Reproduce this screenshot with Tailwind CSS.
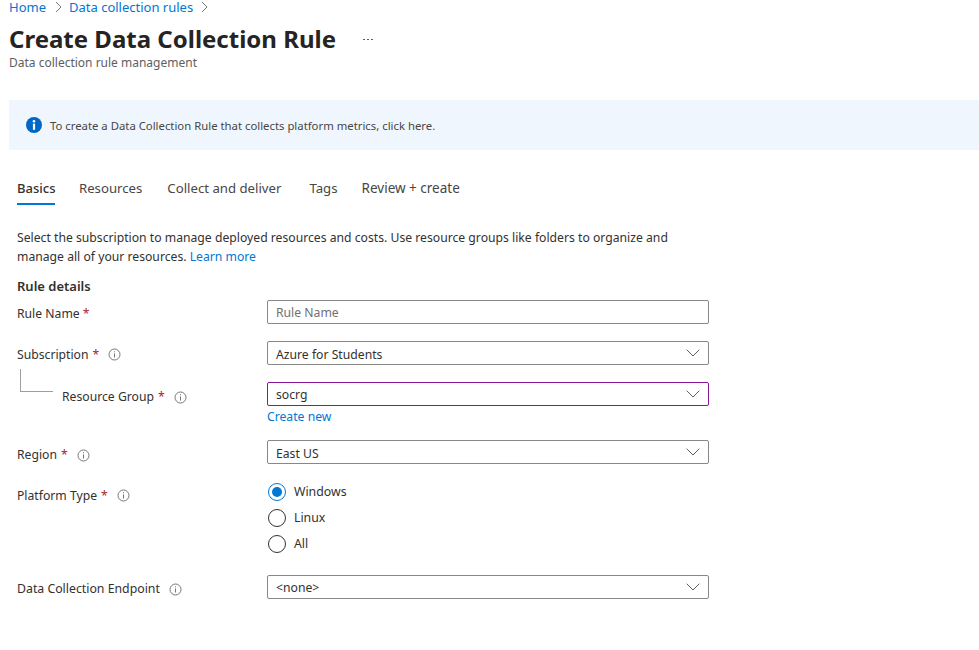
<!DOCTYPE html>
<html lang="en">
<head>
  <meta charset="UTF-8">
  <title>Create Data Collection Rule</title>
  <script src="https://cdn.jsdelivr.net/npm/@tailwindcss/browser@4"></script>
</head>
<body class="bg-white h-[650px] overflow-hidden font-['Noto_Sans',sans-serif] text-[#323130] text-[12.2px]">
  <nav class="flex items-center h-[14px] pl-[9px] text-[#0078d4] text-[13px] leading-[14px]">
    <a href="#">Home</a>
    <svg class="ml-[9px] mr-[7px]" width="7" height="12" viewBox="0 0 7 12" fill="none" stroke="#767676"><path d="M1 1l5 5-5 5"/></svg>
    <a href="#">Data collection rules</a>
    <svg class="ml-[8px]" width="7" height="12" viewBox="0 0 7 12" fill="none" stroke="#767676"><path d="M1 1l5 5-5 5"/></svg>
  </nav>

  <header class="pl-[9px] mt-[9px]">
    <div class="flex items-center h-[32px]">
      <h1 class="text-[24px] font-bold text-[#252423] leading-[32px]">Create Data Collection Rule</h1>
      <span class="flex gap-[2px] ml-[27px] mt-[1px]">
        <i class="w-[2px] h-[1px] bg-[#605e5c]"></i><i class="w-[2px] h-[1px] bg-[#605e5c]"></i><i class="w-[2px] h-[1px] bg-[#605e5c]"></i>
      </span>
    </div>
    <p class="text-[12px] text-[#605e5c] leading-[16px]">Data collection rule management</p>
  </header>

  <div class="ml-[9px] mt-[29px] h-[50px] bg-[#eff6fe] flex items-center pl-[17px] rounded-[1px]">
    <svg width="16" height="16" viewBox="0 0 16 16"><circle cx="8" cy="8" r="8" fill="#0067c5"/><circle cx="8" cy="4.3" r="1.3" fill="#fff"/><rect x="6.9" y="6.6" width="2.2" height="6.2" fill="#fff"/></svg>
    <span class="ml-[8px] mt-[2px] text-[11.33px] text-[#484644]">To create a Data Collection Rule that collects platform metrics, click here.</span>
  </div>

  <div class="flex ml-[17px] mt-[25px] text-[13.2px] leading-[26px] text-[#484644]">
    <a class="h-[30px] border-b-2 border-[#0078d4] text-[13px] font-medium text-[#323130]" href="#">Basics</a>
    <a class="ml-[23.5px]" href="#">Resources</a>
    <a class="ml-[25px]" href="#">Collect and deliver</a>
    <a class="ml-[28px]" href="#">Tags</a>
    <a class="ml-[24px] text-[13.5px]" href="#">Review + create</a>
  </div>

  <main class="pl-[17px] mt-[23px]">
    <p class="w-[680px] leading-[19px]">Select the subscription to manage deployed resources and costs. Use resource groups like folders to organize and manage all of your resources. <a class="text-[#0078d4]" href="#">Learn more</a></p>
    <h2 class="text-[13px] font-semibold leading-[18px] mt-[11px]">Rule details</h2>

    <div class="flex mt-[5px]">
      <div class="w-[250px] pt-[5px] leading-[18px]">Rule Name <span class="text-[#a4262c]">*</span></div>
      <div class="w-[442px] h-[24px] border border-[#8a8886] rounded-[2px] px-[8px] pt-[3px] flex items-center text-[#717171]">Rule Name</div>
    </div>

    <div class="flex mt-[17px]">
      <div class="w-[250px] pt-[3px] leading-[18px] h-[24px] flex items-center self-start">Subscription <span class="text-[#a4262c] ml-[4px]">*</span>
        <svg class="ml-[8.5px]" width="13" height="13" viewBox="0 0 13 13" fill="none" stroke="#767676"><circle cx="6.5" cy="6.5" r="5.5"/><path d="M6.5 5.5v4M6.5 3.3v1"/></svg>
      </div>
      <div class="w-[442px] h-[24px] border border-[#8a8886] rounded-[2px] pl-[8px] pr-[8px] pt-[5px] flex items-center justify-between">Azure for Students
        <svg class="-mt-[5px]" width="14" height="8" viewBox="0 0 14 8" fill="none" stroke="#605e5c"><path d="M.7.7L7 7 13.3.7"/></svg>
      </div>
    </div>

    <div class="flex mt-[17px] relative">
      <div class="absolute left-[3px] top-[-13px] w-[33px] h-[23px] border-l border-b border-[#a19f9d]"></div>
      <div class="w-[250px] pl-[45px] pt-[6px] leading-[18px] h-[24px] flex items-center self-start">Resource Group <span class="text-[#a4262c] ml-[4px]">*</span>
        <svg class="ml-[9px]" width="13" height="13" viewBox="0 0 13 13" fill="none" stroke="#767676"><circle cx="6.5" cy="6.5" r="5.5"/><path d="M6.5 5.5v4M6.5 3.3v1"/></svg>
      </div>
      <div class="w-[442px]">
        <div class="h-[24px] border border-[#881798] rounded-[2px] pl-[8px] pr-[8px] pt-[3px] flex items-center justify-between">socrg
          <svg class="-mt-[3px]" width="14" height="8" viewBox="0 0 14 8" fill="none" stroke="#605e5c"><path d="M.7.7L7 7 13.3.7"/></svg>
        </div>
        <a class="block text-[#0078d4] leading-[18px] mt-[2px]" href="#">Create new</a>
      </div>
    </div>

    <div class="flex mt-[14px]">
      <div class="w-[250px] pt-[6px] leading-[18px] h-[24px] flex items-center self-start">Region <span class="text-[#a4262c] ml-[4px]">*</span>
        <svg class="ml-[9px]" width="13" height="13" viewBox="0 0 13 13" fill="none" stroke="#767676"><circle cx="6.5" cy="6.5" r="5.5"/><path d="M6.5 5.5v4M6.5 3.3v1"/></svg>
      </div>
      <div class="w-[442px] h-[24px] border border-[#8a8886] rounded-[2px] pl-[8px] pr-[8px] pt-[5px] flex items-center justify-between">East US
        <svg class="-mt-[5px]" width="14" height="8" viewBox="0 0 14 8" fill="none" stroke="#605e5c"><path d="M.7.7L7 7 13.3.7"/></svg>
      </div>
    </div>

    <div class="flex mt-[19px]">
      <div class="w-[250px] pt-[4px] leading-[18px] flex items-start">Platform Type <span class="text-[#a4262c] ml-[4px]">*</span>
        <svg class="ml-[9px] mt-[2px]" width="13" height="13" viewBox="0 0 13 13" fill="none" stroke="#767676"><circle cx="6.5" cy="6.5" r="5.5"/><path d="M6.5 5.5v4M6.5 3.3v1"/></svg>
      </div>
      <div class="flex flex-col gap-[8px] pl-[1px] text-[12.3px]">
        <label class="flex items-center gap-[8px] h-[18px]">
          <span class="w-[18px] h-[18px] rounded-full border border-[#0078d4] flex items-center justify-center"><span class="w-[10px] h-[10px] rounded-full bg-[#0078d4]"></span></span>Windows
        </label>
        <label class="flex items-center gap-[8px] h-[18px]"><span class="w-[18px] h-[18px] rounded-full border border-[#323130]"></span>Linux</label>
        <label class="flex items-center gap-[8px] h-[18px]"><span class="w-[18px] h-[18px] rounded-full border border-[#323130]"></span>All</label>
      </div>
    </div>

    <div class="flex mt-[22px]">
      <div class="w-[250px] pt-[4px] leading-[18px] h-[24px] flex items-center self-start text-[12.3px]">Data Collection Endpoint
        <svg class="ml-[9px]" width="13" height="13" viewBox="0 0 13 13" fill="none" stroke="#767676"><circle cx="6.5" cy="6.5" r="5.5"/><path d="M6.5 5.5v4M6.5 3.3v1"/></svg>
      </div>
      <div class="w-[442px] h-[24px] border border-[#8a8886] rounded-[2px] pl-[8px] pr-[8px] pt-[3px] flex items-center justify-between">&lt;none&gt;
        <svg class="-mt-[3px]" width="14" height="8" viewBox="0 0 14 8" fill="none" stroke="#605e5c"><path d="M.7.7L7 7 13.3.7"/></svg>
      </div>
    </div>
  </main>
</body>
</html>
